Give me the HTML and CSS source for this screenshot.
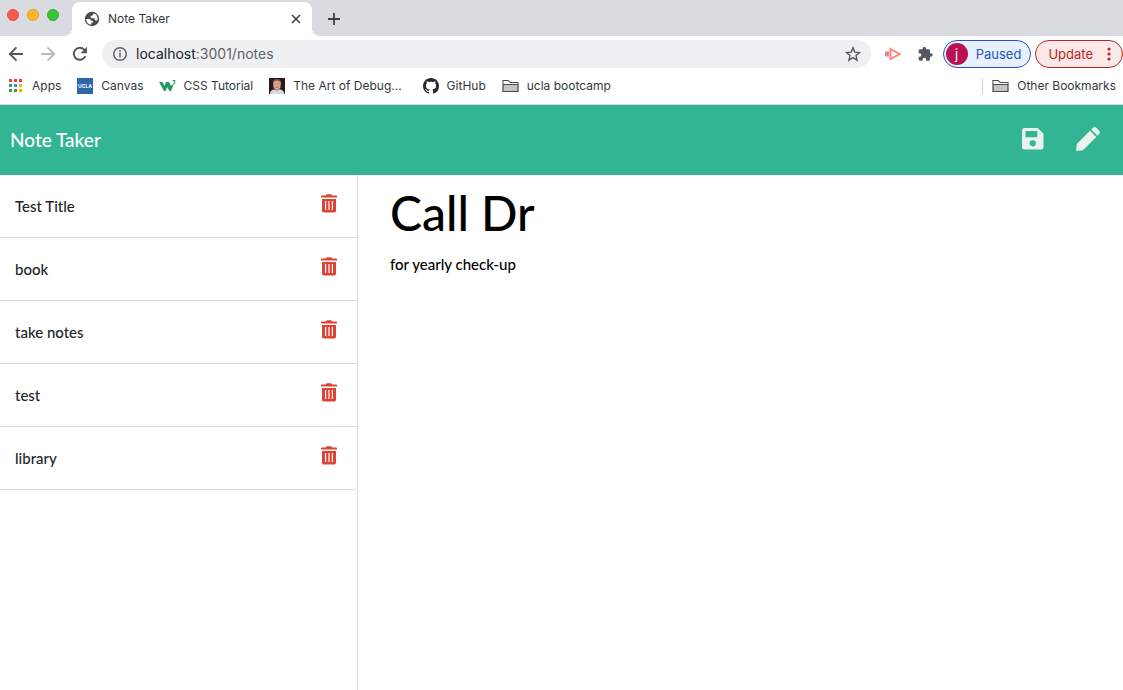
FILE: index.html
```html
<!DOCTYPE html>
<html lang="en">
<head>
<meta charset="utf-8">
<meta name="viewport" content="width=device-width, initial-scale=1">
<title>Note Taker</title>
<link rel="stylesheet" href="styles.css">
</head>
<body>
<svg class="symbols" aria-hidden="true">
  <symbol id="trash" viewBox="0 0 16 20"><path fill-rule="evenodd" d="M0 3.500V2.300q0-.7.8-.7H4.600L5.200.8Q5.500.3 6.200.3h3.600q.7 0 1 .5l.6.8h3.800q.8 0 .8.7v1.200H0zM1 5h14V16.800q0 1.700-1.700 1.700H2.700Q1 18.500 1 16.800zm3 2V16h1.200V7zm3.400 0V16h1.200V7zm3.400 0V16H12V7z"/></symbol>
  <symbol id="folder" viewBox="0 0 17 16"><path d="M1 13.500v-11h5.200l1.800 2h8v9z" fill="#c4c4c4" stroke="#46494d" stroke-width="1.200"/><path d="M1.600 3.100H6l1.800 2h7.600v1.400H1.600z" fill="#fff"/><path d="M1 6.500h15" stroke="#46494d"/></symbol>
</svg>

<header class="browser">
  <div class="tab-strip">
    <div class="lights"><span class="light red"></span><span class="light yellow"></span><span class="light green"></span></div>
    <div class="tab">
      <svg width="16" height="16" viewBox="0 0 16 16"><circle cx="8" cy="8" r="7.200" fill="#46494e"/><path d="M2.200 8h3.300q1.200 0 1.200 1.200v.6h1.500q1 0 1 1v.8H7.400v1.900C4.500 13.800 2.200 11.500 2.200 8zM9.300 2.300v1.200L8 4.700H6.700v1.500q0 1 1 1h3v1.400q0 .9.900.9h1.800C14.200 6.500 12.800 3 9.300 2.300z" fill="#fff"/></svg>
      <span class="tab-title">Note Taker</span>
      <button class="icon-button" aria-label="Close tab"><svg width="10" height="10" viewBox="0 0 10 10"><path d="M1 1l8 8M9 1L1 9" stroke="#3c4043" stroke-width="1.600"/></svg></button>
    </div>
    <button class="icon-button new-tab" aria-label="New tab"><svg width="12" height="12" viewBox="0 0 12 12"><path d="M6 0v12M0 6h12" stroke="#3c4043" stroke-width="1.800"/></svg></button>
  </div>

  <div class="toolbar">
    <nav class="history">
      <button class="icon-button" aria-label="Back"><svg width="16" height="16" viewBox="0 0 16 16"><path d="M15 8H2M8.500 1.300L1.800 8l6.700 6.700" fill="none" stroke="#54575b" stroke-width="1.900"/></svg></button>
      <button class="icon-button" aria-label="Forward"><svg width="16" height="16" viewBox="0 0 16 16"><path d="M1 8h13M7.500 1.300L14.200 8l-6.700 6.700" fill="none" stroke="#b9bbbe" stroke-width="1.900"/></svg></button>
      <button class="icon-button" aria-label="Reload"><svg width="16" height="16" viewBox="0 0 16 16"><path d="M13.300 10.200A6 6 0 1 1 12.300 3.800L14 5.500" fill="none" stroke="#54575b" stroke-width="2"/><path d="M15 .8v6.400H8.600z" fill="#54575b"/></svg></button>
    </nav>
    <div class="address">
      <svg width="16" height="16" viewBox="0 0 16 16"><circle cx="8" cy="8" r="6.300" fill="none" stroke="#5f6368" stroke-width="1.500"/><path d="M8 7v4.300M8 4.300v1.600" stroke="#5f6368" stroke-width="1.600"/></svg>
      <a class="url" href="#"><span class="host">localhost</span>:3001/notes</a>
      <button class="icon-button" aria-label="Bookmark this page"><svg width="16" height="16" viewBox="0 0 16 16"><path d="M8 1.800l1.800 4.300 4.700.4-3.500 3.100 1 4.600L8 11.700l-4 2.500 1-4.600-3.500-3.100 4.700-.4z" fill="none" stroke="#54575b" stroke-width="1.400"/></svg></button>
    </div>
    <button class="icon-button extension" aria-label="Screen recorder"><svg width="16" height="14" viewBox="0 0 16 14"><path d="M0 4.500h4v5H0z" fill="#f97f7c"/><path d="M5.500 2L14.500 7l-9 5z" fill="none" stroke="#f98683" stroke-width="2"/></svg></button>
    <button class="icon-button extension" aria-label="Extensions"><svg width="16" height="16" viewBox="0 0 24 24"><path fill="#54575b" d="M21 11h-1.500V7a2 2 0 0 0-2-2h-4V3.500a2.500 2.500 0 0 0-5 0V5h-4a2 2 0 0 0-2 2v3.800H4a2.700 2.700 0 0 1 0 5.400H2.500V20a2 2 0 0 0 2 2h3.800v-1.500a2.700 2.700 0 0 1 5.400 0V22h3.800a2 2 0 0 0 2-2v-4H21a2.500 2.500 0 0 0 0-5z"/></svg></button>
    <button class="pill paused"><span class="avatar">j</span>Paused</button>
    <button class="pill update">Update<svg width="4" height="14" viewBox="0 0 4 14" fill="#c5221f"><circle cx="2" cy="2" r="1.600"/><circle cx="2" cy="7" r="1.600"/><circle cx="2" cy="12" r="1.600"/></svg></button>
  </div>

  <nav class="bookmarks">
    <a href="#"><svg width="16" height="16" viewBox="0 0 16 16"><path d="M1 1h3v3H1zM6 1h3v3H6zM11 1h3v3h-3z" fill="#e94335"/><path d="M1 6h3v3H1zM1 11h3v3H1zM6 11h3v3H6z" fill="#34a04f"/><path d="M6 6h3v3H6z" fill="#4285f4"/><path d="M11 6h3v3h-3zM11 11h3v3h-3z" fill="#f3b20b"/></svg>Apps</a>
    <a href="#"><svg width="16" height="16" viewBox="0 0 16 16"><path fill="#2c66ab" d="M0 0h16v16H0z"/><text class="ucla" x="8" y="10">UCLA</text></svg>Canvas</a>
    <a href="#"><svg width="16" height="16" viewBox="0 0 16 16"><path d="M-1 4h3.500L4.500 8 6 4h3l2 4 1-2 1.200 1.500L11 13H9.500L7.200 9 5.500 13H4z" fill="#22995b"/><path d="M12.600 2.500h2.500l-1.200 1.600q1.500 0 1.200 1.300-.3.900-2.300.5" fill="none" stroke="#22995b"/></svg>CSS Tutorial</a>
    <a href="#"><svg width="16" height="16" viewBox="0 0 16 16"><path fill="#2a1718" d="M0 0h16v16H0z"/><path fill="#d6d9e3" d="M1 16q0-4 4-4.500l3 1 3-1.300q4 1 4.500 4.800z"/><path fill="#d9a291" d="M4 5q0-3.500 4-3.500T12 5l-.7 5L8 13l-3.300-3z"/><path fill="#7b4a3c" d="M4 5q-.4-4 4-4t4 4q-1-2.500-4-2.500T4 5z"/><path d="M5.500 5.800h1.700m1.700 0h1.600M6.400 9.300h3.200" stroke="#9a6055" stroke-width=".7"/></svg>The Art of Debug...</a>
    <a href="#" class="github"><svg width="16" height="16" viewBox="0 0 16 16"><path fill="#24292e" d="M8 0C3.580 0 0 3.580 0 8c0 3.540 2.290 6.530 5.470 7.590.4.070.55-.17.55-.38 0-.19-.01-.82-.01-1.490-2.010.37-2.530-.49-2.690-.94-.09-.23-.48-.94-.82-1.130-.28-.15-.68-.52-.01-.53.63-.01 1.080.58 1.230.82.72 1.210 1.870.87 2.330.66.070-.52.28-.87.51-1.070-1.780-.2-3.640-.89-3.640-3.950 0-.87.31-1.590.82-2.150-.08-.2-.36-1.020.08-2.120 0 0 .67-.21 2.200.82.64-.18 1.320-.27 2-.27s1.360.09 2 .27c1.530-1.040 2.200-.82 2.200-.82.44 1.100.16 1.920.08 2.120.51.56.82 1.270.82 2.150 0 3.070-1.870 3.750-3.650 3.950.29.25.54.73.54 1.480 0 1.070-.01 1.930-.01 2.200 0 .21.15.46.55.38A8.010 8.010 0 0 0 16 8c0-4.420-3.580-8-8-8z"/></svg>GitHub</a>
    <a href="#"><svg width="17" height="16"><use href="#folder"/></svg>ucla bootcamp</a>
    <a href="#" class="other"><svg width="17" height="16"><use href="#folder"/></svg>Other Bookmarks</a>
  </nav>
</header>

<div class="app-bar">
  <a class="brand" href="#">Note Taker</a>
  <div class="actions">
    <button class="icon-button" aria-label="Save note"><svg width="22" height="22" viewBox="0 0 22 22"><path fill="#e9f1f1" fill-rule="evenodd" d="M2.500 0h13.300l5.700 5.700v13.500q0 2.300-2.300 2.300H2.500Q0 21.500 0 19.200V2.500Q0 0 2.500 0zM3.500 3v6.200h11.800V3zM10.700 12.200a3.100 3.100 0 1 0 .1 6.200 3.100 3.100 0 0 0-.1-6.200z"/></svg></button>
    <button class="icon-button" aria-label="New note"><svg width="24" height="24" viewBox="0 0 24 24"><path fill="#e9f1f1" d="M14 3.700l6.300 6.300L7 23.300l-6 .6Q0 24 .1 23l.7-6zM15.200 2.500l1.700-1.700q1.700-1.500 3.400 0l2.900 2.900q1.500 1.700 0 3.400l-1.700 1.700z"/></svg></button>
  </div>
</div>

<main class="workspace">
  <aside class="sidebar">
    <ul class="notes">
      <li><a href="#">Test Title</a><button class="icon-button" aria-label="Delete Test Title"><svg width="16" height="20"><use href="#trash"/></svg></button></li>
      <li><a href="#">book</a><button class="icon-button" aria-label="Delete book"><svg width="16" height="20"><use href="#trash"/></svg></button></li>
      <li><a href="#">take notes</a><button class="icon-button" aria-label="Delete take notes"><svg width="16" height="20"><use href="#trash"/></svg></button></li>
      <li><a href="#">test</a><button class="icon-button" aria-label="Delete test"><svg width="16" height="20"><use href="#trash"/></svg></button></li>
      <li><a href="#">library</a><button class="icon-button" aria-label="Delete library"><svg width="16" height="20"><use href="#trash"/></svg></button></li>
    </ul>
  </aside>
  <section class="note">
    <input class="note-title" type="text" value="Call Dr" aria-label="Note title" readonly>
    <textarea class="note-text" aria-label="Note text" readonly>for yearly check-up</textarea>
  </section>
</main>
</body>
</html>
```
FILE: styles.css
```css
* { box-sizing: border-box; }

body {
  margin: 0;
  min-height: 100vh;
  display: flex;
  flex-direction: column;
  background: #fff;
  color: #212529;
  font-family: Lato, "Open Sans", sans-serif;
  font-size: 16px;
  font-weight: 500;
}

svg { display: block; flex: none; overflow: visible; }
.symbols { position: absolute; width: 0; height: 0; }
a { color: inherit; text-decoration: none; }
button { font: inherit; cursor: pointer; }

.icon-button {
  flex: none;
  padding: 0;
  border: 0;
  background: none;
}

/* Browser frame */
.browser {
  border-bottom: 1px solid #d4d6da;
  font-family: Inter, Roboto, sans-serif;
  font-size: 12px;
  font-weight: 400;
  color: #34383b;
}

.tab-strip {
  display: flex;
  height: 36px;
  padding-left: 7px;
  background: #dadbe0;
}

.lights { display: flex; gap: 8px; width: 65px; padding-top: 9px; }
.light { width: 12px; height: 12px; border-radius: 50%; border: 1px solid; }
.red { background: #fb5850; border-color: #df4b45; }
.yellow { background: #fcb827; border-color: #dea022; }
.green { background: #3cc637; border-color: #31ab2d; }

.tab {
  position: relative;
  display: flex;
  align-items: center;
  gap: 8px;
  width: 240px;
  margin-top: 2px;
  padding: 0 11px 0 12px;
  border-radius: 8px 8px 0 0;
  background: #fff;
}

.tab::before,
.tab::after {
  content: "";
  position: absolute;
  bottom: 0;
  width: 8px;
  height: 8px;
}
.tab::before { right: 100%; background: radial-gradient(circle at 0 0, transparent 8px, #fff 8px); }
.tab::after { left: 100%; background: radial-gradient(circle at 100% 0, transparent 8px, #fff 8px); }
.tab-title { flex: 1; padding-bottom: 2px; }
.new-tab { padding: 2px 16px 0; }

.toolbar {
  display: flex;
  align-items: center;
  height: 36px;
  padding-left: 8px;
}
.history { display: flex; gap: 16px; margin-right: 14px; }

.address {
  flex: 1;
  display: flex;
  align-items: center;
  gap: 8px;
  height: 28px;
  margin-right: 14px;
  padding: 0 10px;
  border-radius: 14px;
  background: #eff0f2;
  font-size: 14px;
}
.url { flex: 1; padding-bottom: 2px; color: #5f6368; }
.host { color: #202124; }
.extension { margin-right: 16px; }

.pill {
  display: flex;
  align-items: center;
  height: 28px;
  border: 1px solid;
  border-radius: 14px;
  font-size: 13px;
}
.paused {
  gap: 8px;
  margin: 0 4px 0 -6px;
  padding: 0 9px 0 2px;
  background: #e8f0fb;
  color: #2355c8;
}
.avatar {
  width: 22px;
  border-radius: 50%;
  background: #b71354;
  color: #fff;
  line-height: 22px;
}
.update { gap: 14px; padding: 0 11px 0 12px; background: #fae9e8; color: #b92521; }

.bookmarks {
  display: flex;
  align-items: center;
  height: 32px;
  padding: 0 7px 5px 8px;
  gap: 16px;
}
.bookmarks a { display: flex; align-items: center; gap: 8px; white-space: nowrap; }
.bookmarks .github { margin-left: 5px; }
.bookmarks .other { margin-left: auto; padding-left: 9px; border-left: 1px solid #cdcfd2; }
.ucla { fill: #fff; font-size: 5px; font-weight: 700; text-anchor: middle; }

/* Application */
.app-bar {
  display: flex;
  align-items: center;
  justify-content: space-between;
  height: 70px;
  padding: 0 23px 2px 10px;
  background: #32b592;
}
.brand { color: #fff; font-size: 19px; }
.actions { display: flex; align-items: center; gap: 32px; }

.workspace {
  flex: 1;
  display: grid;
  grid-template-columns: 358px 1fr;
}
.sidebar { border-right: 1px solid #d8d9da; }
.notes { margin: 0; padding: 0; list-style: none; }
.notes li {
  display: flex;
  justify-content: space-between;
  height: 63px;
  padding: 19px 20px 0 15px;
  border-bottom: 1px solid #d8d9da;
}
.notes li:last-child { border-bottom-right-radius: 4px; }
.notes a { font-size: 15px; line-height: 24px; }
.notes .icon-button { align-self: flex-start; color: #de4335; }
.notes svg { fill: currentColor; }

.note { display: flex; flex-direction: column; padding: 8px 32px; }
.note-title,
.note-text {
  width: 100%;
  padding: 0;
  border: 0;
  outline: 0;
  background: none;
  color: #000;
  font-family: inherit;
  font-weight: inherit;
}
.note-title { height: 58px; font-size: 48px; }
.note-text { flex: 1; padding-top: 11px; font-size: 15px; line-height: 24px; resize: none; }
```
